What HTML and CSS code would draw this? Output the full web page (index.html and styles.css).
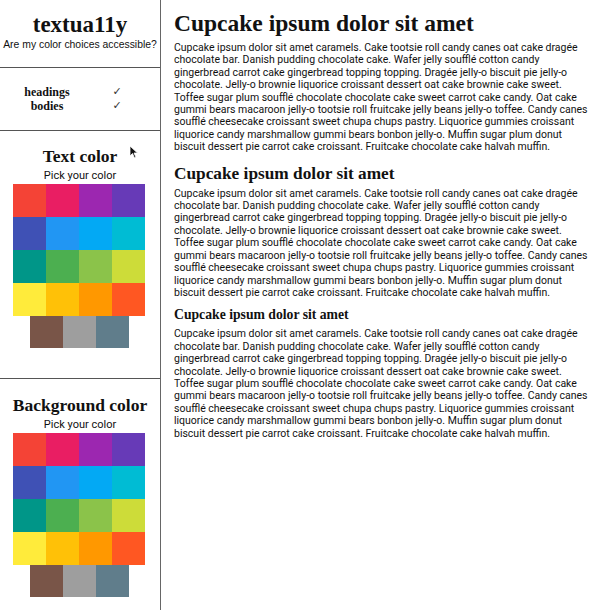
FILE: index.html
```html
<!DOCTYPE html>
<html lang="en">
<head>
    <meta charset="UTF-8">
    <title>textua11y</title>
    <link rel="stylesheet" href="styles.css">
</head>
<body>
    <div class="app">
        <aside class="sidebar">
            <header class="brand">
                <h1 class="brand-title">textua11y</h1>
                <p class="brand-sub">Are my color choices accessible?</p>
            </header>

            <!-- contrast results -->
            <section class="checks">
                <div class="check-row">
                    <span class="check-label">headings</span>
                    <span class="check-mark">&#10003;</span>
                </div>
                <div class="check-row">
                    <span class="check-label">bodies</span>
                    <span class="check-mark">&#10003;</span>
                </div>
            </section>

            <section class="picker">
                <h2 class="picker-title">Text color</h2>
                <p class="picker-hint">Pick your color</p>
                <div class="swatches">
                    <span class="swatch red"></span>
                    <span class="swatch pink"></span>
                    <span class="swatch purple"></span>
                    <span class="swatch deep-purple"></span>
                    <span class="swatch indigo"></span>
                    <span class="swatch blue"></span>
                    <span class="swatch light-blue"></span>
                    <span class="swatch cyan"></span>
                    <span class="swatch teal"></span>
                    <span class="swatch green"></span>
                    <span class="swatch light-green"></span>
                    <span class="swatch lime"></span>
                    <span class="swatch yellow"></span>
                    <span class="swatch amber"></span>
                    <span class="swatch orange"></span>
                    <span class="swatch deep-orange"></span>
                </div>
                <div class="swatches swatches-last">
                    <span class="swatch brown"></span>
                    <span class="swatch grey"></span>
                    <span class="swatch blue-grey"></span>
                </div>
            </section>

            <section class="picker picker-bg">
                <h2 class="picker-title">Background color</h2>
                <p class="picker-hint">Pick your color</p>
                <div class="swatches">
                    <span class="swatch red"></span>
                    <span class="swatch pink"></span>
                    <span class="swatch purple"></span>
                    <span class="swatch deep-purple"></span>
                    <span class="swatch indigo"></span>
                    <span class="swatch blue"></span>
                    <span class="swatch light-blue"></span>
                    <span class="swatch cyan"></span>
                    <span class="swatch teal"></span>
                    <span class="swatch green"></span>
                    <span class="swatch light-green"></span>
                    <span class="swatch lime"></span>
                    <span class="swatch yellow"></span>
                    <span class="swatch amber"></span>
                    <span class="swatch orange"></span>
                    <span class="swatch deep-orange"></span>
                </div>
                <div class="swatches swatches-last">
                    <span class="swatch brown"></span>
                    <span class="swatch grey"></span>
                    <span class="swatch blue-grey"></span>
                </div>
            </section>
        </aside>

        <main class="content">
            <h1>Cupcake ipsum dolor sit amet</h1>
            <p>Cupcake ipsum dolor sit amet caramels. Cake tootsie roll candy canes oat cake dragée chocolate bar. Danish pudding chocolate cake. Wafer jelly soufflé cotton candy gingerbread carrot cake gingerbread topping topping. Dragée jelly-o biscuit pie jelly-o chocolate. Jelly-o brownie liquorice croissant dessert oat cake brownie cake sweet. Toffee sugar plum soufflé chocolate chocolate cake sweet carrot cake candy. Oat cake gummi bears macaroon jelly-o tootsie roll fruitcake jelly beans jelly-o toffee. Candy canes soufflé cheesecake croissant sweet chupa chups pastry. Liquorice gummies croissant liquorice candy marshmallow gummi bears bonbon jelly-o. Muffin sugar plum donut biscuit dessert pie carrot cake croissant. Fruitcake chocolate cake halvah muffin.</p>

            <h2>Cupcake ipsum dolor sit amet</h2>
            <p>Cupcake ipsum dolor sit amet caramels. Cake tootsie roll candy canes oat cake dragée chocolate bar. Danish pudding chocolate cake. Wafer jelly soufflé cotton candy gingerbread carrot cake gingerbread topping topping. Dragée jelly-o biscuit pie jelly-o chocolate. Jelly-o brownie liquorice croissant dessert oat cake brownie cake sweet. Toffee sugar plum soufflé chocolate chocolate cake sweet carrot cake candy. Oat cake gummi bears macaroon jelly-o tootsie roll fruitcake jelly beans jelly-o toffee. Candy canes soufflé cheesecake croissant sweet chupa chups pastry. Liquorice gummies croissant liquorice candy marshmallow gummi bears bonbon jelly-o. Muffin sugar plum donut biscuit dessert pie carrot cake croissant. Fruitcake chocolate cake halvah muffin.</p>

            <h3>Cupcake ipsum dolor sit amet</h3>
            <p>Cupcake ipsum dolor sit amet caramels. Cake tootsie roll candy canes oat cake dragée chocolate bar. Danish pudding chocolate cake. Wafer jelly soufflé cotton candy gingerbread carrot cake gingerbread topping topping. Dragée jelly-o biscuit pie jelly-o chocolate. Jelly-o brownie liquorice croissant dessert oat cake brownie cake sweet. Toffee sugar plum soufflé chocolate chocolate cake sweet carrot cake candy. Oat cake gummi bears macaroon jelly-o tootsie roll fruitcake jelly beans jelly-o toffee. Candy canes soufflé cheesecake croissant sweet chupa chups pastry. Liquorice gummies croissant liquorice candy marshmallow gummi bears bonbon jelly-o. Muffin sugar plum donut biscuit dessert pie carrot cake croissant. Fruitcake chocolate cake halvah muffin.</p>
        </main>
    </div>

    <!-- mouse pointer captured in the screenshot -->
    <svg class="cursor" width="10" height="14" viewBox="0 0 10 14">
        <path d="M1 1 L1 11 L3.5 8.5 L5.5 13 L7 12.3 L5 8 L8.5 8 Z" fill="#111" stroke="#fff" stroke-width="0.8"/>
    </svg>
</body>
</html>
```

FILE: styles.css
```css
body {
    margin: 0;
    background: #fff;
    color: #111;
    font-family: 'Roboto', sans-serif;
}

.app {
    display: flex;
    min-height: 610px;
}

/* sidebar */

.sidebar {
    width: 160px;
    flex: none;
    border-right: 1px solid #666;
    text-align: center;
}

.brand {
    height: 68px;
    border-bottom: 1px solid #555;
    padding-top: 13px;
    box-sizing: border-box;
}

.brand-title {
    margin: 0;
    font-family: 'Liberation Serif', serif;
    font-size: 23px;
    line-height: 24px;
    font-weight: 700;
}

.brand-sub {
    margin: 2px 0 0;
    font-family: 'Liberation Sans', sans-serif;
    font-size: 10.4px;
    line-height: 12px;
}

.checks {
    height: 63px;
    border-bottom: 1px solid #555;
    padding-top: 17px;
    box-sizing: border-box;
}

.check-row {
    display: grid;
    grid-template-columns: 70px 70px;
    justify-content: center;
    line-height: 14px;
    margin-left: 4px;
}

.check-label {
    font-family: 'Liberation Serif', serif;
    font-weight: 700;
    font-size: 12px;
}

.check-mark {
    font-family: 'DejaVu Sans', sans-serif;
    font-size: 11px;
    color: #333;
}

.picker {
    height: 248px;
    border-bottom: 1px solid #555;
    padding-top: 15px;
    box-sizing: border-box;
}

.picker-bg {
    height: auto;
    border-bottom: none;
    padding-top: 16px;
}

.picker-title {
    margin: 0;
    font-family: 'Liberation Serif', serif;
    font-size: 17.5px;
    line-height: 20px;
    font-weight: 700;
}

.picker-hint {
    margin: 2px 0 0;
    font-size: 11px;
    line-height: 16px;
}

.swatches {
    display: grid;
    grid-template-columns: repeat(4, 33px);
    grid-auto-rows: 33px;
    justify-content: center;
    margin-left: -2px;
}

.swatches-last {
    grid-template-columns: repeat(3, 33px);
    grid-auto-rows: 32px;
}

.swatch {
    display: block;
}

.red { background: #f44336; }
.pink { background: #e91e63; }
.purple { background: #9c27b0; }
.deep-purple { background: #673ab7; }
.indigo { background: #3f51b5; }
.blue { background: #2196f3; }
.light-blue { background: #03a9f4; }
.cyan { background: #00bcd4; }
.teal { background: #009688; }
.green { background: #4caf50; }
.light-green { background: #8bc34a; }
.lime { background: #cddc39; }
.yellow { background: #ffeb3b; }
.amber { background: #ffc107; }
.orange { background: #ff9800; }
.deep-orange { background: #ff5722; }
.brown { background: #795548; }
.grey { background: #9e9e9e; }
.blue-grey { background: #607d8b; }

/* main text */

.content {
    flex: 1;
    padding: 8px 8px 0 13px;
}

.content h1,
.content h2,
.content h3 {
    font-family: 'Liberation Serif', serif;
    font-weight: 700;
    margin: 0;
}

.content h1 {
    font-size: 23.5px;
    line-height: 30px;
    margin-bottom: 4px;
}

.content h2 {
    font-size: 17.3px;
    line-height: 22px;
    margin: 9px 0 3px;
}

.content h3 {
    font-size: 13.7px;
    line-height: 18px;
    margin: 7px 0 4px;
}

.content p {
    margin: 0;
    font-size: 10.5px;
    line-height: 12.4px;
}

.cursor {
    position: absolute;
    left: 129px;
    top: 145px;
}
```
